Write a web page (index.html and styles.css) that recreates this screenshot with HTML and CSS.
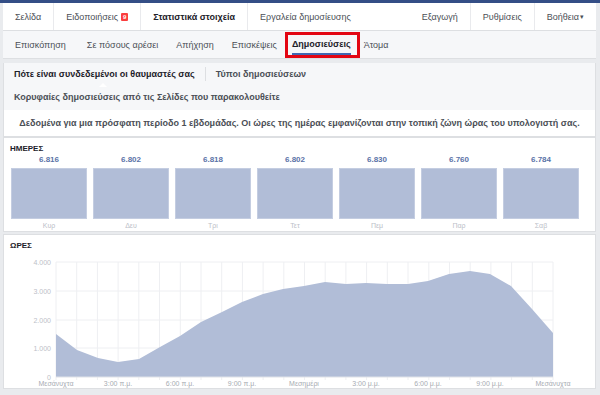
FILE: index.html
```html
<!DOCTYPE html>
<html lang="el">
	<head>
		<meta charset="UTF-8" />
		<meta name="viewport" content="width=device-width, initial-scale=1.0" />
		<title>Στατιστικά στοιχεία</title>
		<link rel="stylesheet" href="styles.css">
	</head>
	<body>
		<div class="topline"></div>
		<div class="page">
			<nav class="mainnav">
				<ul class="nav-group">
					<li>Σελίδα</li>
					<li>Ειδοποιήσεις <span class="badge">9</span></li>
					<li class="active">Στατιστικά στοιχεία</li>
					<li class="plain">Εργαλεία δημοσίευσης</li>
				</ul>
				<ul class="nav-group">
					<li>Εξαγωγή</li>
					<li>Ρυθμίσεις</li>
					<li>Βοήθεια <span class="caret">&#9662;</span></li>
				</ul>
			</nav>

			<nav class="subnav">
				<span class="tab">Επισκόπηση</span>
				<span class="tab">Σε πόσους αρέσει</span>
				<span class="tab">Απήχηση</span>
				<span class="tab">Επισκέψεις</span>
				<span class="tab selected"><span class="tab-label">Δημοσιεύσεις</span></span>
				<span class="tab">Άτομα</span>
			</nav>

			<section class="card">
				<div class="filters">
					<div class="filter-row">
						<span class="filter current">Πότε είναι συνδεδεμένοι οι θαυμαστές σας</span>
						<span class="filter divided">Τύποι δημοσιεύσεων</span>
					</div>
					<div class="filter-row second">
						<span class="filter">Κορυφαίες δημοσιεύσεις από τις Σελίδες που παρακολουθείτε</span>
					</div>
				</div>
				<p class="note">Δεδομένα για μια πρόσφατη περίοδο 1 εβδομάδας. Οι ώρες της ημέρας εμφανίζονται στην τοπική ζώνη ώρας του υπολογιστή σας.</p>
			</section>

			<section class="card days">
				<h3>ΗΜΕΡΕΣ</h3>
				<div class="day-list">
					<div class="day"><span class="value">6.816</span><div class="bar"></div><span class="label">Κυρ</span></div>
					<div class="day"><span class="value">6.802</span><div class="bar"></div><span class="label">Δευ</span></div>
					<div class="day"><span class="value">6.818</span><div class="bar"></div><span class="label">Τρι</span></div>
					<div class="day"><span class="value">6.802</span><div class="bar"></div><span class="label">Τετ</span></div>
					<div class="day"><span class="value">6.830</span><div class="bar"></div><span class="label">Πεμ</span></div>
					<div class="day"><span class="value">6.760</span><div class="bar"></div><span class="label">Παρ</span></div>
					<div class="day"><span class="value">6.784</span><div class="bar"></div><span class="label">Σαβ</span></div>
				</div>
			</section>

			<section class="card hours">
				<h3>ΩΡΕΣ</h3>
				<!-- chart drawn in page coordinates: x 4..595, y 252..388 -->
				<svg class="hour-chart" width="591" height="136" viewBox="4 252 591 136">
					<g class="grid">
						<line x1="56" y1="262" x2="553" y2="262" />
						<line x1="56" y1="291" x2="553" y2="291" />
						<line x1="56" y1="320" x2="553" y2="320" />
						<line x1="56" y1="348" x2="553" y2="348" />
						<path id="vgrid" d="" />
					</g>
					<path class="area" d="M56,334 L77,350 L98,358 L118,362 L139,359 L160,347 L180,336 L201,322 L222,312 L242,302 L263,294 L283,289 L304,286 L325,282 L346,284 L366,283 L387,284 L408,284 L428,281 L449,274 L470,271 L490,274 L511,286 L532,309 L553,333 L553,377 L56,377 Z" />
					<line class="axis" x1="56" y1="377" x2="553" y2="377" />
					<g class="ylabels">
						<text x="51" y="264.5">4.000</text>
						<text x="51" y="293.5">3.000</text>
						<text x="51" y="322.5">2.000</text>
						<text x="51" y="350.5">1.000</text>
						<text x="51" y="379.5">0</text>
					</g>
					<g class="xlabels">
						<text x="56" y="386">Μεσάνυχτα</text>
						<text x="118" y="386">3:00 π.μ.</text>
						<text x="180" y="386">6:00 π.μ.</text>
						<text x="242" y="386">9:00 π.μ.</text>
						<text x="304" y="386">Μεσημέρι</text>
						<text x="366" y="386">3:00 μ.μ.</text>
						<text x="428" y="386">6:00 μ.μ.</text>
						<text x="490" y="386">9:00 μ.μ.</text>
						<text x="553" y="386">Μεσάνυχτα</text>
					</g>
				</svg>
			</section>
		</div>

		<script>
			// hour gridlines, one every hour across the plot
			const grid = document.getElementById("vgrid");
			let d = "";
			for (let h = 0; h <= 24; h++) {
				const x = 56 + (497 / 24) * h;
				d += "M" + x.toFixed(1) + ",262 V380 ";
			}
			grid.setAttribute("d", d);
		</script>
	</body>
</html>
```

FILE: styles.css
```css
body {
	margin: 0;
	background-color: #e9ebee;
	font-family: "Liberation Sans", Arial, sans-serif;
	font-size: 9px;
	color: #4b4f56;
}
.topline {
	height: 3px;
	background-color: #344e86;
}
.page {
	margin: 0 4px 0 3px;
}
.mainnav {
	display: flex;
	justify-content: space-between;
	height: 27px;
	background-color: #fff;
	border-bottom: 1px solid #dddfe2;
}
.nav-group {
	display: flex;
	margin: 0;
	padding: 0;
	list-style: none;
}
.nav-group li {
	display: flex;
	align-items: center;
	padding: 0 12px;
	border-right: 1px solid #e9eaed;
}
.nav-group li:last-child {
	border-right: none;
}
.nav-group li.active {
	font-weight: bold;
	color: #1d2129;
}
.badge {
	display: inline-block;
	margin-left: 3px;
	width: 7px;
	height: 8px;
	line-height: 8px;
	border-radius: 1px;
	background-color: #fa3e3e;
	color: #fff;
	font-size: 6px;
	font-weight: bold;
	text-align: center;
}
.caret {
	font-size: 7px;
	margin-left: 1px;
}
.subnav {
	display: flex;
	align-items: center;
	height: 27px;
	padding-left: 3px;
	background-color: #f6f7f9;
	border-bottom: 1px solid #dddfe2;
}
.tab {
	padding: 0 9px;
}
.tab:first-child {
	padding-right: 12px;
}
.tab.selected {
	display: flex;
	align-items: stretch;
	height: 20px;
	padding: 0 6px 0 4px;
	border: 3px solid #e30613;
	margin: 0 -5px 0 -1px;
}
.tab-label {
	display: flex;
	align-items: center;
	font-weight: bold;
	color: #1d2129;
	border-bottom: 2px solid #4267b2;
}
.card {
	background-color: #fff;
	border: 1px solid #dddfe2;
}
.filters {
	background-color: #f6f7f9;
}
.card:first-of-type {
	margin-top: 4px;
	border-top: none;
}
.filter-row {
	display: flex;
	align-items: center;
	height: 21px;
	padding-left: 10px;
}
.filter-row.second {
	height: 26px;
}
.filter {
	font-weight: bold;
	color: #4b4f56;
}
.filter.current {
	color: #1d2129;
	position: relative;
}
.filter.current::after {
	content: "";
	position: absolute;
	left: 85px;
	bottom: -8px;
	border: 4px solid transparent;
	border-bottom-color: #fff;
}
.filter.divided {
	margin-left: 10px;
	padding-left: 10px;
	border-left: 1px solid #dddfe2;
	line-height: 14px;
}
.note {
	margin: 0;
	height: 26px;
	line-height: 26px;
	text-align: center;
	font-weight: bold;
	border-bottom: 1px solid #dddfe2;
}
.days,
.hours {
	border-top: none;
}
.hours {
	margin-top: 2px;
	border-top: 1px solid #dddfe2;
}
h3 {
	margin: 0;
	padding: 6px 6px 0;
	font-size: 8px;
	line-height: 9px;
	font-weight: bold;
	color: #1d2129;
}
.hours h3 {
	padding-bottom: 2px;
}
.day-list {
	display: flex;
	gap: 6px;
	padding: 1px 0 0 7px;
}
.day {
	display: flex;
	flex-direction: column;
	align-items: center;
	width: 76px;
}
.value {
	font-size: 8px;
	font-weight: bold;
	color: #5b73a7;
	line-height: 12px;
}
.bar {
	width: 100%;
	height: 51px;
	margin-top: 2px;
	background-color: #b1bdd7;
	border: 1px solid #c4cde1;
	box-sizing: border-box;
}
.label {
	margin-top: 2px;
	font-size: 7px;
	color: #bcc0c8;
	line-height: 10px;
}
.hour-chart {
	display: block;
}
.grid line,
.grid path {
	stroke: #eeeff2;
	stroke-width: 1;
}
.area {
	fill: #b1bdd7;
}
.axis {
	stroke: #dfe2e8;
}
.ylabels text {
	font-size: 7px;
	fill: #bcc0c8;
	text-anchor: end;
}
.xlabels text {
	font-size: 7px;
	fill: #a7abb2;
	text-anchor: middle;
}
```
